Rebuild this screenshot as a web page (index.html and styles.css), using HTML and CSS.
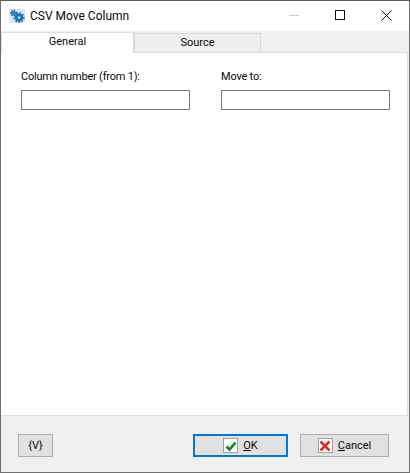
FILE: index.html
```html
<!DOCTYPE html>
<html>

<head>
  <title>CSV Move Column</title>
  <meta name="viewport" content="width=device-width,initial-scale=1">
  <link rel="stylesheet" href="styles.css">
</head>

<body>
  <div class="window">
    <header class="titlebar">
      <svg class="app-icon" width="16" height="16" viewBox="0 0 16 16">
        <rect x="0" y="1" width="16" height="14" fill="#d6e8f4"/>
        <circle cx="4.5" cy="5" r="2.6" fill="#3a82b5"/>
        <circle cx="4.5" cy="5" r="3" fill="none" stroke="#3a82b5" stroke-width="1.4" stroke-dasharray="1.4 1.4"/>
        <circle cx="10" cy="9.5" r="4.2" fill="#1c72b2"/>
        <circle cx="10" cy="9.5" r="4.8" fill="none" stroke="#1c72b2" stroke-width="1.6" stroke-dasharray="1.6 1.6"/>
        <circle cx="10" cy="9.5" r="1.3" fill="#cfe4f2"/>
      </svg>
      <span class="title">CSV Move Column</span>
      <div class="controls">
        <span class="ctl"><i class="ctl__min"></i></span>
        <span class="ctl"><i class="ctl__max"></i></span>
        <span class="ctl">
          <svg width="11" height="11" viewBox="0 0 11 11"><path d="M.5 .5l10 10M10.5 .5l-10 10" stroke="#111" fill="none"/></svg>
        </span>
      </div>
    </header>

    <nav class="tabs">
      <div class="tab tab--active">General</div>
      <div class="tab">Source</div>
    </nav>

    <section class="panel">
      <label class="field">
        Column number (from 1):
        <input type="text">
      </label>
      <label class="field">
        Move to:
        <input type="text">
      </label>
    </section>

    <footer class="footer">
      <button class="btn btn--vars">{V}</button>
      <div class="footer__right">
        <button class="btn btn--ok">
          <span class="btn__icon">
            <svg width="12" height="12" viewBox="0 0 12 12"><path d="M1.5 6.5l3 3 6-7" stroke="#0b8a1c" stroke-width="2.6" fill="none"/></svg>
          </span>
          <span><u>O</u>K</span>
        </button>
        <button class="btn btn--cancel">
          <span class="btn__icon">
            <svg width="12" height="12" viewBox="0 0 12 12"><path d="M1.5 1.5l9 9M10.5 1.5l-9 9" stroke="#d9301f" stroke-width="2.8" fill="none"/></svg>
          </span>
          <span><u>C</u>ancel</span>
        </button>
      </div>
    </footer>
  </div>
</body>

</html>
```

FILE: styles.css
```css
* {
  box-sizing: border-box;
}

html,
body {
  margin: 0;
  height: 100%;
}

body {
  font-family: Roboto, sans-serif;
  font-size: 11px;
  color: #0a0a0a;
  background: #f0f0f0;
}

.window {
  height: 473px;
  width: 410px;
  display: flex;
  flex-direction: column;
  border: 1px solid #6e6e6e;
  border-top-color: #5a5a5a;
  background: #f0f0f0;
}

.titlebar {
  height: 30px;
  flex: none;
  display: flex;
  align-items: center;
  padding-left: 8px;
  background: #fff;
}

.app-icon {
  margin-right: 5px;
}

.title {
  font-size: 12px;
}

.controls {
  margin-left: auto;
  display: flex;
  align-self: flex-start;
}

.ctl {
  width: 46px;
  height: 28px;
  display: flex;
  align-items: center;
  justify-content: center;
}

.ctl__min {
  width: 10px;
  height: 1px;
  background: #ccc;
}

.ctl__max {
  width: 10px;
  height: 10px;
  border: 1px solid #111;
}

.tabs {
  height: 21px;
  flex: none;
  display: flex;
  align-items: flex-end;
}

.tab {
  width: 127px;
  height: 19px;
  text-align: center;
  line-height: 18px;
  background: #efefef;
  border: 1px solid #d9d9d9;
  border-bottom: 0;
}

.tab--active {
  width: 133px;
  height: 21px;
  line-height: 17px;
  background: #fff;
  border-color: #dcdcdc;
  position: relative;
  top: 1px;
}

.panel {
  height: 364px;
  flex: none;
  margin-right: 1px;
  padding: 16px 17px 0 20px;
  display: flex;
  gap: 31px;
  align-items: flex-start;
  background: #fff;
  border-top: 1px solid #dcdcdc;
  border-bottom: 1px solid #dcdcdc;
  border-right: 1px solid #dcdcdc;
}

.field {
  flex: 1;
  display: flex;
  flex-direction: column;
  gap: 6px;
  line-height: 15px;
  letter-spacing: -.2px;
}

.field input {
  height: 20px;
  width: 100%;
  margin: 0;
  border: 1px solid #7a7a7a;
  background: #fff;
}

.footer {
  flex: 1;
  display: flex;
  align-items: center;
  justify-content: space-between;
  padding: 3px 20px 0 17px;
}

.footer__right {
  display: flex;
  gap: 12px;
}

.btn {
  height: 23px;
  margin: 0;
  padding: 0;
  display: flex;
  align-items: center;
  justify-content: center;
  gap: 5px;
  font-family: inherit;
  font-size: 11px;
  color: #0a0a0a;
  background: #e1e1e1;
  border: 1px solid #adadad;
}

.btn--vars {
  width: 35px;
}

.btn--ok {
  width: 95px;
  border: 2px solid #0078d7;
}

.btn--cancel {
  width: 89px;
}

.btn__icon {
  width: 15px;
  height: 15px;
  display: flex;
  align-items: center;
  justify-content: center;
  background: #fff;
  border: 1px solid #a0a0a0;
}
```
